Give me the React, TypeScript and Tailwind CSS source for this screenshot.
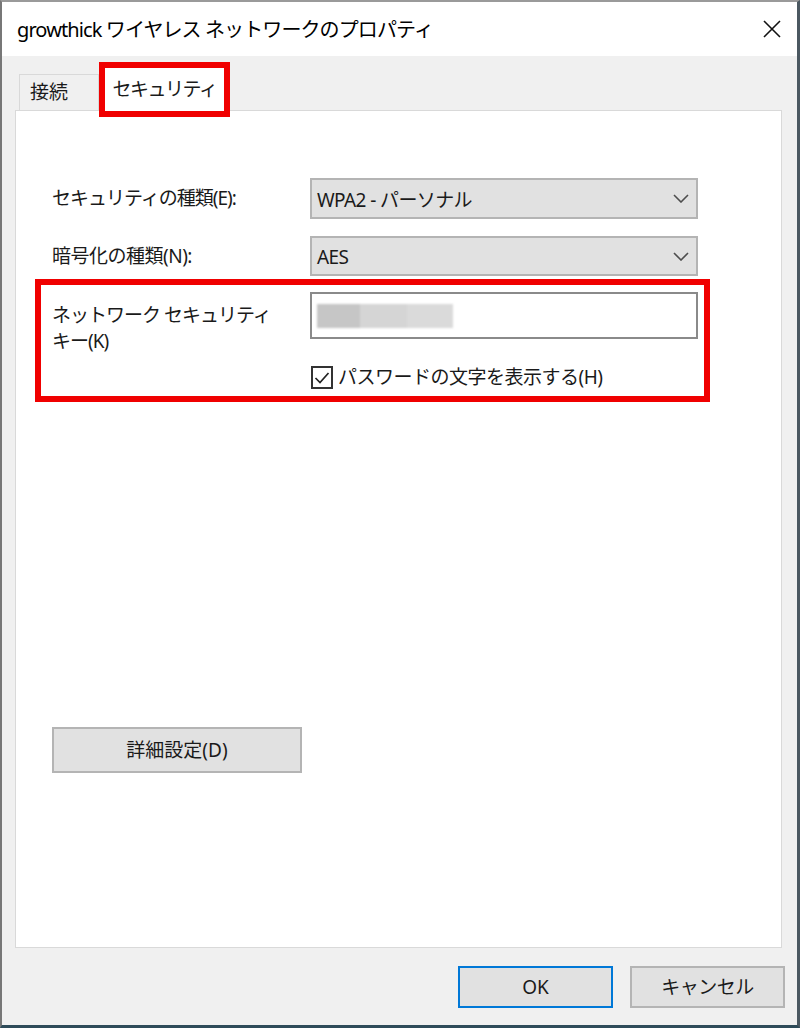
import React from 'react';

const font = { fontFamily: '"Noto Sans", "Noto Sans CJK JP", sans-serif' };

const Chevron: React.FC = () => (
  <svg width="16" height="9" viewBox="0 0 16 9" className="shrink-0">
    <polyline points="1,1 8,8 15,1" fill="none" stroke="#4d4d4d" strokeWidth="1.6" />
  </svg>
);

const Select: React.FC<{ value: string; h: string }> = ({ value, h }) => (
  <div className={`w-[388px] ${h} bg-[#e1e1e1] border-2 border-[#b4b4b4] flex items-center justify-between pl-[5px] pr-[7px]`}>
    <span className="text-[19px] tracking-[-0.6px] text-[#1a1a1a] leading-none mt-[3px]">{value}</span>
    <Chevron />
  </div>
);

export default function App() {
  return (
    <div
      className="w-[800px] h-[1028px] flex flex-col bg-[#f0f0f0] border-l-2 border-r-[3px] border-t-2 border-b-[3px] border-l-[#777] border-r-[#4b5861] border-t-[#9a9a9a] border-b-[#2e4b59]"
      style={font}
    >
      {/* title bar */}
      <div className="h-[54px] bg-white flex items-center justify-between pl-[15px] pr-[16px] shrink-0">
        <span className="text-[20px] tracking-[-0.9px] text-black mt-[2px]">growthick ワイヤレス ネットワークのプロパティ</span>
        <svg width="18" height="18" viewBox="0 0 18 18">
          <path d="M1 1 L17 17 M17 1 L1 17" stroke="#111" strokeWidth="1.6" />
        </svg>
      </div>

      {/* tabs */}
      <div className="flex items-start h-[54px] pt-[6px] pl-[17px] shrink-0">
        <div className="mt-[12px] h-[36px] w-[80px] bg-[#f0f0f0] border border-b-0 border-[#d9d9d9] flex items-center pl-[10px]">
          <span className="text-[19px] text-[#1a1a1a]">接続</span>
        </div>
        <div className="relative z-10 w-[131px] h-[55px] border-[6px] border-[#f00000] bg-white flex items-center justify-center">
          <span className="text-[19px] tracking-[-1.5px] text-[#1a1a1a]">セキュリティ</span>
        </div>
      </div>

      {/* panel */}
      <div className="ml-[13px] mr-[15px] h-[838px] bg-white border border-[#d9d9d9] flex flex-col shrink-0">
        <div className="pl-[36px] pt-[67px] flex flex-col gap-[17px]">
          <div className="flex items-center">
            <span className="w-[258px] text-[19px] tracking-[-1px] text-[#1a1a1a]">セキュリティの種類(E):</span>
            <Select value="WPA2 - パーソナル" h="h-[41px]" />
          </div>
          <div className="flex items-center">
            <span className="w-[258px] text-[19px] tracking-[-0.5px] text-[#1a1a1a]">暗号化の種類(N):</span>
            <Select value="AES" h="h-[40px]" />
          </div>
        </div>

        <div className="ml-[19px] mt-[3px] w-[675px] border-[6px] border-[#f00000] pt-[7px] pl-[11px] pb-[7px] flex flex-col">
          <div className="flex items-start h-[47px]">
            <span className="w-[258px] mt-[10px] text-[19px] tracking-[-1px] leading-[26px] text-[#1a1a1a]">
              ネットワーク セキュリティ
              <br />
              キー(K)
            </span>
            <div className="w-[388px] h-[47px] border-2 border-[#8a8a8a] flex items-center pl-[5px]">
              <div className="flex h-[24px] blur-[1px]">
                <div className="w-[43px] bg-[#c6c6c6]" />
                <div className="w-[47px] bg-[#d5d5d5]" />
                <div className="w-[46px] bg-[#dadada]" />
              </div>
            </div>
          </div>
          <div className="flex items-center ml-[259px] mt-[27px] gap-[5px]">
            <div className="w-[22px] h-[23px] border-2 border-[#333] bg-white flex items-center justify-center">
              <svg width="16" height="14" viewBox="0 0 16 14">
                <polyline points="1.5,7 6,11.5 14.5,2" fill="none" stroke="#222" strokeWidth="1.7" />
              </svg>
            </div>
            <span className="text-[19px] tracking-[-0.5px] leading-none text-[#1a1a1a]">パスワードの文字を表示する(H)</span>
          </div>
        </div>

        <div className="ml-[36px] mt-[325px] w-[250px] h-[46px] bg-[#e1e1e1] border-2 border-[#b4b4b4] flex items-center justify-center">
          <span className="text-[19px] text-[#1a1a1a]">詳細設定(D)</span>
        </div>
      </div>

      {/* footer */}
      <div className="flex justify-end gap-[17px] pt-[18px] pr-[12px]">
        <div className="w-[155px] h-[42px] bg-[#e1e1e1] border-2 border-[#0078d7] flex items-center justify-center">
          <span className="text-[19px] text-[#1a1a1a]">OK</span>
        </div>
        <div className="w-[155px] h-[42px] bg-[#e1e1e1] border-2 border-[#b4b4b4] flex items-center justify-center">
          <span className="text-[19px] tracking-[-0.5px] text-[#1a1a1a]">キャンセル</span>
        </div>
      </div>
    </div>
  );
}
